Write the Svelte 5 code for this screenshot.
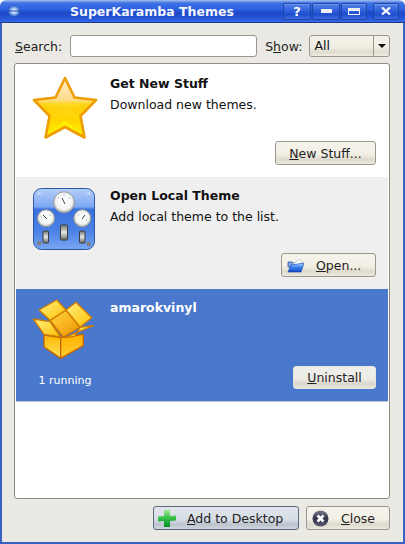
<script>
  const themes = [
    { title: 'Get New Stuff', desc: 'Download new themes.', icon: 'star', kind: 'plain' },
    { title: 'Open Local Theme', desc: 'Add local theme to the list.', icon: 'panel', kind: 'alt' },
    { title: 'amarokvinyl', desc: '', icon: 'box', kind: 'selected', status: '1 running' }
  ];
</script>

<div class="window">
  <header class="titlebar">
    <svg class="app-icon" width="16" height="14" viewBox="0 0 16 14">
      <defs>
        <radialGradient id="orb" cx="50%" cy="50%" r="55%">
          <stop offset="0" stop-color="#ffffff" />
          <stop offset="0.45" stop-color="#9fc4f5" />
          <stop offset="1" stop-color="#1d49b8" />
        </radialGradient>
      </defs>
      <ellipse cx="8" cy="7" rx="6" ry="5.5" fill="url(#orb)" />
      <path d="M2 7h12" stroke="#1a3fa8" stroke-width="1.4" opacity="0.7" />
    </svg>
    <div class="title">SuperKaramba Themes</div>
    <div class="controls">
      <button class="ctl q">?</button>
      <button class="ctl"><span class="min"></span></button>
      <button class="ctl narrow"><span class="max"></span></button>
      <button class="ctl narrow last">
        <svg width="10" height="8" viewBox="0 0 10 8"><path d="M1 .5l8 7M9 .5l-8 7" stroke="#fff" stroke-width="2.2" /></svg>
      </button>
    </div>
  </header>

  <div class="body">
    <div class="filter">
      <span class="label"><u>S</u>earch:</span>
      <input class="search" type="text" />
      <span class="label show">S<u>h</u>ow:</span>
      <div class="combo">
        <span class="combo-text">All</span>
        <span class="combo-arrow"><i></i></span>
      </div>
    </div>

    <div class="list">
      {#each themes as t}
        <div class="row {t.kind}">
          <div class="icon-col">
            {#if t.icon === 'star'}
              <svg width="70" height="70" viewBox="0 0 70 70">
                <defs>
                  <linearGradient id="star" x1="0" y1="0" x2="0" y2="1">
                    <stop offset="0" stop-color="#ffeccc" />
                    <stop offset="0.36" stop-color="#ffdc8c" />
                    <stop offset="0.44" stop-color="#ffd820" />
                    <stop offset="0.7" stop-color="#ffd400" />
                    <stop offset="1" stop-color="#fff000" />
                  </linearGradient>
                </defs>
                <path d="M35 7L44.5 26.5 66 29 50.5 45 54.5 66.5 35 56 15.5 66.5 19.5 45 4 29 25.5 26.5z"
                  fill="url(#star)" stroke="#ee9c00" stroke-width="2.6" stroke-linejoin="round" />
                <path d="M19 62L35 50 51 62 35 54z" fill="#fff000" />
                <path d="M12 32Q35 42 58 32L50 44 35 38 20 44z" fill="#ffcc00" opacity="0.5" />
              </svg>
            {:else if t.icon === 'panel'}
              <svg width="70" height="70" viewBox="0 0 70 70">
                <defs>
                  <linearGradient id="pbg" x1="0" y1="0" x2="0" y2="1">
                    <stop offset="0" stop-color="#b4d0fa" />
                    <stop offset="0.3" stop-color="#7ea8f2" />
                    <stop offset="0.34" stop-color="#3a72de" />
                    <stop offset="0.7" stop-color="#4a82e6" />
                    <stop offset="1" stop-color="#7aa6f2" />
                  </linearGradient>
                  <radialGradient id="dial" cx="50%" cy="45%" r="55%">
                    <stop offset="0" stop-color="#ffffff" />
                    <stop offset="0.72" stop-color="#f2f4f4" />
                    <stop offset="1" stop-color="#a4a8a4" />
                  </radialGradient>
                  <linearGradient id="sw" x1="0" y1="0" x2="0" y2="1">
                    <stop offset="0" stop-color="#777" />
                    <stop offset="0.5" stop-color="#e4e4e4" />
                    <stop offset="1" stop-color="#666" />
                  </linearGradient>
                </defs>
                <rect x="3.5" y="5.5" width="61" height="61" rx="8" fill="url(#pbg)" stroke="#2a55a8" />
                <circle cx="9.3" cy="10.3" r="1.6" fill="#c8d6ec" />
                <circle cx="58.7" cy="10.3" r="1.6" fill="#c8d6ec" />
                <circle cx="9.3" cy="60.3" r="2.2" fill="#808080" />
                <circle cx="58.7" cy="61" r="2.2" fill="#808080" />
                <circle cx="34" cy="19.3" r="10.5" fill="url(#dial)" stroke="#9a9e9a" />
                <circle cx="16" cy="35.3" r="8.5" fill="url(#dial)" stroke="#9a9e9a" />
                <circle cx="52.3" cy="35.3" r="8.5" fill="url(#dial)" stroke="#9a9e9a" />
                <path d="M32 15l3 6M13 32l4 4M55 32l-3 4" stroke="#444" stroke-width="1" />
                <path d="M28 15h1M39 15h1M34 11v1M11 34h1M20 32h1M48 32h1M56 37h1" stroke="#7aa2e8" stroke-width="1" />
                <rect x="13" y="48" width="5.5" height="12" rx="1" fill="url(#sw)" stroke="#3c3c3c" />
                <rect x="30.5" y="42" width="7" height="15" rx="1" fill="url(#sw)" stroke="#3c3c3c" />
                <rect x="49.5" y="48" width="5.5" height="12" rx="1" fill="url(#sw)" stroke="#3c3c3c" />
              </svg>
            {:else}
              <svg width="70" height="70" viewBox="0 0 210 210">
                <defs>
                  <linearGradient id="bleft" x1="0" y1="0" x2="0" y2="1">
                    <stop offset="0" stop-color="#ffb800" />
                    <stop offset="1" stop-color="#ffe060" />
                  </linearGradient>
                  <linearGradient id="bright" x1="0" y1="0" x2="0" y2="1">
                    <stop offset="0" stop-color="#ffb000" />
                    <stop offset="1" stop-color="#ffd030" />
                  </linearGradient>
                  <linearGradient id="bflap" x1="0" y1="0" x2="1" y2="1">
                    <stop offset="0" stop-color="#fff080" />
                    <stop offset="1" stop-color="#ffc000" />
                  </linearGradient>
                  <linearGradient id="binner" x1="0" y1="0" x2="1" y2="1">
                    <stop offset="0" stop-color="#ffd840" />
                    <stop offset="1" stop-color="#f09000" />
                  </linearGradient>
                </defs>
                <g stroke="#d07c00" stroke-width="4" stroke-linejoin="round">
                  <path d="M60 76L108 45 150 96 100 126z" fill="url(#binner)" />
                  <path d="M27 45L80 15 108 45 60 76z" fill="url(#bflap)" />
                  <path d="M108 45L138 22 185 68 150 96z" fill="url(#bflap)" />
                  <path d="M42 120L92 128V190L42 156z" fill="url(#bleft)" stroke="#c46400" />
                  <path d="M92 128L160 118V152L92 190z" fill="url(#bright)" stroke="#c46400" />
                  <path d="M10 72L60 80 92 126 42 118z" fill="url(#bflap)" />
                  <path d="M104 128L190 92 150 97 134 124z" fill="url(#bflap)" />
                </g>
              </svg>
            {/if}
            {#if t.status}<div class="status">{t.status}</div>{/if}
          </div>
          <div class="main">
            <div class="name">{t.title}</div>
            {#if t.desc}<div class="desc">{t.desc}</div>{/if}
            <div class="actions">
              {#if t.icon === 'star'}
                <button class="btn new"><u>N</u>ew Stuff...</button>
              {:else if t.icon === 'panel'}
                <button class="btn open">
                  <svg width="17" height="15" viewBox="0 0 17 15">
                    <defs>
                      <linearGradient id="folder" x1="0" y1="0" x2="0" y2="1">
                        <stop offset="0" stop-color="#bcd8ff" />
                        <stop offset="0.45" stop-color="#3c86f0" />
                        <stop offset="1" stop-color="#1444c0" />
                      </linearGradient>
                    </defs>
                    <path d="M1 4h4l1 1h6v4H1z" fill="#7fa8e4" stroke="#1b4fb0" stroke-width="0.7" />
                    <path d="M6 6l7-5 2 4-2 3z" fill="#fff" stroke="#9ab" stroke-width="0.5" />
                    <path d="M1 14l3-7 13-2-3 9z" fill="url(#folder)" stroke="#1040a8" stroke-width="0.6" />
                  </svg>
                  <span><u>O</u>pen...</span>
                </button>
              {:else}
                <button class="btn uninstall"><u>U</u>ninstall</button>
              {/if}
            </div>
          </div>
        </div>
      {/each}
    </div>

    <div class="footer">
      <button class="btn add">
        <svg width="18" height="18" viewBox="0 0 18 18">
          <defs>
            <linearGradient id="plus" x1="0" y1="0" x2="0" y2="1">
              <stop offset="0" stop-color="#a8eca0" />
              <stop offset="0.45" stop-color="#3cc44c" />
              <stop offset="1" stop-color="#008c20" />
            </linearGradient>
          </defs>
          <path d="M6 1l6-.5V7l6-.5V11.5L12 12v6H6V12L0 12.5V7.5L6 7z" fill="url(#plus)" />
        </svg>
        <span><u>A</u>dd to Desktop</span>
      </button>
      <button class="btn close">
        <svg width="17" height="17" viewBox="0 0 17 17">
          <defs>
            <linearGradient id="closebg" x1="0" y1="0" x2="0" y2="1">
              <stop offset="0" stop-color="#7c7c90" />
              <stop offset="0.5" stop-color="#34344a" />
              <stop offset="1" stop-color="#5a5a70" />
            </linearGradient>
          </defs>
          <circle cx="8.5" cy="8.5" r="8" fill="url(#closebg)" />
          <path d="M5.5 5.5l6 6M11.5 5.5l-6 6" stroke="#fff" stroke-width="2.6" />
        </svg>
        <span><u>C</u>lose</span>
      </button>
    </div>
  </div>
</div>

<style>
  :global(body) {
    margin: 0;
    background: #fff;
  }

  .window {
    width: 405px;
    height: 544px;
    box-sizing: border-box;
    display: flex;
    flex-direction: column;
    font-family: "DejaVu Sans", sans-serif;
    font-size: 12.5px;
    color: #111;
    overflow: hidden;
  }

  .titlebar {
    height: 23px;
    flex: none;
    display: flex;
    align-items: center;
    border-radius: 6px 6px 0 0;
    background: linear-gradient(#a4bff0 0, #3f72e2 3px, #2d62e4 9px, #1c46c6 13px, #2a5ee0 20px, #3d6fe0 23px);
    color: #f4f6ff;
    border-bottom: 1px solid #1c3a8c;
    box-sizing: border-box;
  }

  .app-icon {
    margin-left: 6px;
    flex: none;
  }

  .title {
    margin-left: 48px;
    font-weight: bold;
    font-size: 12.5px;
    flex: 1;
  }

  .controls {
    display: flex;
    gap: 1px;
    margin-right: 6px;
  }

  .ctl {
    width: 28px;
    height: 17px;
    padding: 0;
    border: 1px solid #1f45a8;
    border-radius: 2px;
    background: linear-gradient(#5282e8, #2c5cd8 50%, #1f4ccc 70%, #3a6ce0);
    box-shadow: inset 0 1px 0 #6f98ec;
    color: #fff;
    font: bold 13px "DejaVu Sans", sans-serif;
    display: flex;
    align-items: center;
    justify-content: center;
  }

  .ctl.narrow {
    width: 26px;
  }

  .ctl.last {
    margin-left: 5px;
  }

  .min {
    width: 11px;
    height: 4px;
    background: #eef0f8;
  }

  .max {
    width: 10px;
    height: 3px;
    border: 1px solid #eef0f8;
    border-top-width: 3px;
  }

  .body {
    flex: 1;
    display: flex;
    flex-direction: column;
    background: #ebe9e3;
    border: solid #3a62c4;
    border-width: 0 2px 2px;
    padding: 12px 13px 0 13px;
    min-height: 0;
  }

  .filter {
    display: flex;
    align-items: center;
    height: 22px;
    flex: none;
  }

  .label {
    color: #222;
  }

  .search {
    width: 186px;
    height: 20px;
    box-sizing: content-box;
    padding: 0;
    margin: 0 8px;
    border: 1px solid #9a978e;
    border-radius: 3px;
    background: #fff;
  }

  .show {
    margin-right: 7px;
  }

  .combo {
    width: 79px;
    height: 20px;
    display: flex;
    border: 1px solid #9a978e;
    border-radius: 3px;
    background: linear-gradient(#f4f1e8, #f1eee4 55%, #dfdbcf 80%, #eeebe2);
  }

  .combo-text {
    flex: 1;
    padding-left: 4px;
    line-height: 19px;
  }

  .combo-arrow {
    width: 15px;
    border-left: 1px solid #9a978e;
    display: flex;
    align-items: center;
    justify-content: center;
  }

  .combo-arrow i {
    border: solid transparent;
    border-width: 4px 4px 0;
    border-top-color: #111;
  }

  .list {
    margin: 6px 0 0 -1px;
    height: 436px;
    flex: none;
    box-sizing: border-box;
    border: 1px solid #8e8c84;
    border-radius: 3px;
    background: #fff;
    padding: 1px 1px 0 1px;
    overflow: hidden;
  }

  .row {
    height: 112px;
    display: flex;
    box-sizing: border-box;
  }

  .row.alt {
    background: #efefef;
  }

  .row.selected {
    background: #4a78cc;
    color: #fff;
    box-shadow: 0 1px 0 #c4c4c4;
  }

  .icon-col {
    width: 94px;
    flex: none;
    box-sizing: border-box;
    display: flex;
    flex-direction: column;
    align-items: center;
    padding: 6px 0 0 4px;
  }

  .status {
    font-size: 11px;
    margin-top: 9px;
  }

  .main {
    flex: 1;
    display: flex;
    flex-direction: column;
    padding: 11px 12px 12px 0;
  }

  .name {
    font-weight: bold;
  }

  .desc {
    margin-top: 6px;
  }

  .actions {
    margin-top: auto;
    display: flex;
    justify-content: flex-end;
  }

  .btn {
    height: 24px;
    padding: 0;
    box-sizing: border-box;
    border: 1px solid #9a978e;
    border-radius: 3px;
    background: linear-gradient(#f6f3ea, #f2efe5 55%, #dedacd 80%, #ece9df);
    font: 12.5px "DejaVu Sans", sans-serif;
    color: #222;
    display: flex;
    align-items: center;
    justify-content: center;
  }

  .new {
    width: 101px;
  }

  .open {
    width: 95px;
    justify-content: flex-start;
    padding-left: 5px;
  }

  .open span {
    margin-left: 12px;
  }

  .uninstall {
    width: 83px;
    height: 23px;
    background: linear-gradient(#f0eeea, #eeece6 55%, #d9d6cd 80%, #e8e6e0);
    border-color: #e8e6e0;
  }

  .footer {
    display: flex;
    justify-content: flex-end;
    gap: 7px;
    margin-top: 7px;
  }

  .add {
    width: 146px;
    justify-content: flex-start;
    padding-left: 4px;
    background: linear-gradient(#dfe4ea, #d8dee6 55%, #bcc4ce 80%, #cfd5dc);
    border-color: #5a6880;
  }

  .add span {
    margin-left: 11px;
  }

  .close {
    width: 84px;
    justify-content: flex-start;
    padding-left: 5px;
  }

  .close span {
    margin-left: 12px;
  }
</style>
